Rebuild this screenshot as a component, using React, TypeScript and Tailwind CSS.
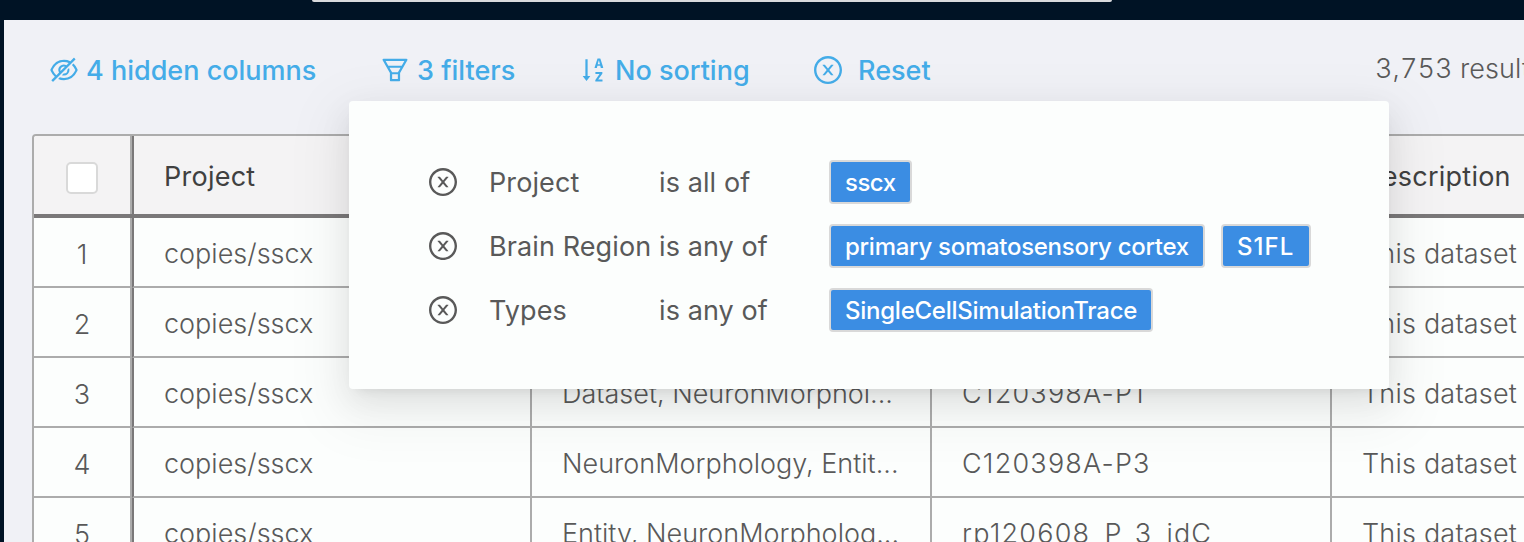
import React from 'react';
import { AiOutlineEyeInvisible, AiOutlineFunnelPlot, AiOutlineSortAscending } from 'react-icons/ai';

const rows = [
  ['1', 'copies/sscx', '', '', 'This dataset'],
  ['2', 'copies/sscx', '', '', 'This dataset'],
  ['3', 'copies/sscx', 'Dataset, NeuronMorphol...', 'C120398A-P1', 'This dataset'],
  ['4', 'copies/sscx', 'NeuronMorphology, Entit...', 'C120398A-P3', 'This dataset'],
  ['5', 'copies/sscx', 'Entity, NeuronMorpholog...', 'rp120608_P_3_idC', 'This dataset'],
];

const filters = [
  { field: 'Project', operator: 'is all of', values: [{ label: 'sscx', tracking: 'tracking-[-0.5px]' }] },
  {
    field: 'Brain Region',
    operator: 'is any of',
    values: [
      { label: 'primary somatosensory cortex', tracking: 'tracking-[-0.28px]' },
      { label: 'S1FL', tracking: 'tracking-[1.1px]' },
    ],
  },
  {
    field: 'Types',
    operator: 'is any of',
    values: [{ label: 'SingleCellSimulationTrace', tracking: 'tracking-[-0.25px]' }],
  },
];

function CloseCircle({ className }: { className?: string }) {
  return (
    <svg viewBox="0 0 1024 1024" fill="currentColor" className={className}>
      <path d="M685.4 354.8c0-4.4-3.6-8-8-8l-66 .3L512 465.6l-99.3-118.4-66.1-.3c-4.4 0-8 3.5-8 8 0 1.9.7 3.7 1.9 5.2l130.1 155L340.5 670a8.32 8.32 0 0 0-1.9 5.2c0 4.4 3.6 8 8 8l66.1-.3L512 564.4l99.3 118.4 66 .3c4.4 0 8-3.5 8-8 0-1.9-.7-3.7-1.9-5.2L553.5 515l130.1-155c1.2-1.4 1.8-3.3 1.8-5.3z" />
      <path d="M512 65C264.6 65 64 265.6 64 513s200.6 448 448 448 448-200.6 448-448S759.4 65 512 65zm0 820c-205.4 0-372-166.6-372-372s166.6-372 372-372 372 166.6 372 372-166.6 372-372 372z" />
    </svg>
  );
}

function Toolbar() {
  return (
    <div className="flex h-[100px] items-center pl-11 text-[27px] font-medium leading-none text-[#44ace8]">
      <div className="flex w-[331px] shrink-0 items-center gap-1.5">
        <AiOutlineEyeInvisible className="size-8 shrink-0" />
        <span>4 hidden columns</span>
      </div>
      <div className="flex w-[198px] shrink-0 items-center gap-1.5">
        <AiOutlineFunnelPlot className="size-8 shrink-0" />
        <span>3 filters</span>
      </div>
      <div className="flex w-[235px] shrink-0 items-center gap-1.5">
        <AiOutlineSortAscending className="size-8 shrink-0" />
        <span>No sorting</span>
      </div>
      <div className="flex w-[563px] shrink-0 items-center gap-3.5">
        <CloseCircle className="size-8 shrink-0" />
        <span>Reset</span>
      </div>
      <span className="shrink-0 pb-1 font-light tracking-[0.1px] text-[#595959] tabular-nums">3,753 results</span>
    </div>
  );
}

function Table() {
  return (
    <div className="mt-[14px] ml-7 w-[1700px] overflow-hidden rounded-tl border-t-2 border-l-2 border-[#acacac] bg-[#fcfefd] text-[27px] leading-none text-[#595959]">
      <div className="flex h-[82px] border-b-4 border-[#7a7879] bg-[#f4f3f4] font-normal tracking-[0.25px] text-[#404040]">
        <div className="flex w-[98px] items-center justify-center border-r-2 border-[#acacac] pt-1.5">
          <div className="size-8 rounded-[5px] border-2 border-[#d9d9d9] bg-white" />
        </div>
        <div className="flex w-[400px] items-center border-r-2 border-l-2 border-r-[#acacac] border-l-[#7a7879] pt-0.5 pl-[30px]">
          Project
        </div>
        <div className="w-[400px] border-r-2 border-[#acacac]" />
        <div className="w-[400px] border-r-2 border-[#acacac]" />
        <div className="flex items-center pt-0.5 pl-[30px]">Description</div>
      </div>
      {rows.map(([n, project, types, name, description]) => (
        <div key={n} className="flex h-[70px] font-light">
          <div className="flex w-[98px] items-center justify-center border-r-2 border-b-2 border-[#acacac] pt-1">{n}</div>
          <div className="flex w-[400px] items-center border-r-2 border-b-2 border-l-2 border-[#acacac] border-l-[#7a7879] pl-[30px] pt-0.5">
            {project}
          </div>
          <div className="flex w-[400px] items-center whitespace-nowrap border-r-2 border-b-2 border-[#acacac] pl-[30px] pt-0.5">
            {types}
          </div>
          <div className="flex w-[400px] items-center border-r-2 border-b-2 border-[#acacac] pl-[30px] pt-0.5 tracking-[1.2px]">
            {name}
          </div>
          <div className="flex w-[400px] items-center border-b-2 border-[#acacac] pl-[30px] pt-0.5 tracking-[0.2px]">
            {description}
          </div>
        </div>
      ))}
    </div>
  );
}

function FilterPanel() {
  return (
    <div className="absolute top-[101px] left-[349px] flex h-72 w-[1040px] flex-col justify-center rounded bg-[#fcfefd] pt-0.5 pl-20 text-[27px] leading-none tracking-[0.1px] text-[#595959] shadow-[0_6px_12px_-8px_rgba(0,0,0,0.12),0_12px_32px_0_rgba(0,0,0,0.08),0_18px_56px_16px_rgba(0,0,0,0.05)]">
      {filters.map((f) => (
        <div key={f.field} className="flex h-16 items-center">
          <div className="w-[60px]">
            <CloseCircle className="-ml-0.5 size-8" />
          </div>
          <div className="w-[170px] whitespace-nowrap">{f.field}</div>
          <div className="w-[170px]">{f.operator}</div>
          <div className="flex gap-4">
            {f.values.map((v) => (
              <span
                key={v.label}
                className={`flex h-11 items-center whitespace-nowrap rounded border-2 border-[#d9d9d9] bg-[#3b8de3] px-3.5 pt-0.5 text-2xl leading-none font-medium text-white ${v.tracking}`}
              >
                {v.label}
              </span>
            ))}
          </div>
        </div>
      ))}
    </div>
  );
}

export default function App() {
  return (
    <div className="relative h-[542px] w-full overflow-hidden bg-[#001325] font-['Inter',sans-serif]">
      <div className="flex h-5 items-start pl-[312px]">
        <div className="h-0.5 w-[800px] rounded-b bg-[#d9dadd]" />
      </div>
      <div className="ml-1 h-[522px] overflow-hidden bg-[#f0f1f6]">
        <Toolbar />
        <Table />
      </div>
      <FilterPanel />
    </div>
  );
}
